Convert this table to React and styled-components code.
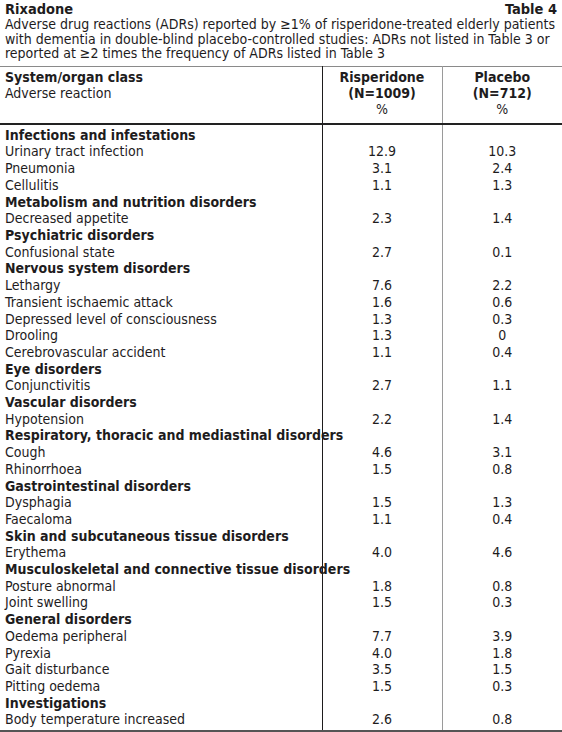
import React from 'react';
import styled, { createGlobalStyle } from 'styled-components';

const GlobalStyle = createGlobalStyle`
  body {
    margin: 0;
    background: #ffffff;
    color: #1e1c1d;
    font-family: "DejaVu Sans Condensed", "Liberation Sans Narrow", "Arial Narrow", sans-serif;
  }
`;

const rows = [
  { group: 'Infections and infestations' },
  { name: 'Urinary tract infection', ris: '12.9', pla: '10.3' },
  { name: 'Pneumonia', ris: '3.1', pla: '2.4' },
  { name: 'Cellulitis', ris: '1.1', pla: '1.3' },
  { group: 'Metabolism and nutrition disorders' },
  { name: 'Decreased appetite', ris: '2.3', pla: '1.4' },
  { group: 'Psychiatric disorders' },
  { name: 'Confusional state', ris: '2.7', pla: '0.1' },
  { group: 'Nervous system disorders' },
  { name: 'Lethargy', ris: '7.6', pla: '2.2' },
  { name: 'Transient ischaemic attack', ris: '1.6', pla: '0.6' },
  { name: 'Depressed level of consciousness', ris: '1.3', pla: '0.3' },
  { name: 'Drooling', ris: '1.3', pla: '0' },
  { name: 'Cerebrovascular accident', ris: '1.1', pla: '0.4' },
  { group: 'Eye disorders' },
  { name: 'Conjunctivitis', ris: '2.7', pla: '1.1' },
  { group: 'Vascular disorders' },
  { name: 'Hypotension', ris: '2.2', pla: '1.4' },
  { group: 'Respiratory, thoracic and mediastinal disorders' },
  { name: 'Cough', ris: '4.6', pla: '3.1' },
  { name: 'Rhinorrhoea', ris: '1.5', pla: '0.8' },
  { group: 'Gastrointestinal disorders' },
  { name: 'Dysphagia', ris: '1.5', pla: '1.3' },
  { name: 'Faecaloma', ris: '1.1', pla: '0.4' },
  { group: 'Skin and subcutaneous tissue disorders' },
  { name: 'Erythema', ris: '4.0', pla: '4.6' },
  { group: 'Musculoskeletal and connective tissue disorders' },
  { name: 'Posture abnormal', ris: '1.8', pla: '0.8' },
  { name: 'Joint swelling', ris: '1.5', pla: '0.3' },
  { group: 'General disorders' },
  { name: 'Oedema peripheral', ris: '7.7', pla: '3.9' },
  { name: 'Pyrexia', ris: '4.0', pla: '1.8' },
  { name: 'Gait disturbance', ris: '3.5', pla: '1.5' },
  { name: 'Pitting oedema', ris: '1.5', pla: '0.3' },
  { group: 'Investigations' },
  { name: 'Body temperature increased', ris: '2.6', pla: '0.8' },
];

const App = () => {
  return (
    <>
      <GlobalStyle />
      <Page>
        <TitleBar>
          <span>Rixadone</span>
          <span>Table 4</span>
        </TitleBar>
        <Caption>
          Adverse drug reactions (ADRs) reported by ≥1% of risperidone-treated elderly patients
          <br />
          with dementia in double-blind placebo-controlled studies: ADRs not listed in Table 3 or
          <br />
          reported at ≥2 times the frequency of ADRs listed in Table 3
        </Caption>
        <Table>
          <colgroup>
            <col style={{ width: 322 }} />
            <col style={{ width: 120 }} />
            <col style={{ width: 120 }} />
          </colgroup>
          <thead>
            <tr>
              <HeadLabel>
                <strong>System/organ class</strong>
                <br />
                Adverse reaction
              </HeadLabel>
              <HeadValue $divider="dark">
                <strong>Risperidone</strong>
                <br />
                <strong>(N=1009)</strong>
                <br />
                %
              </HeadValue>
              <HeadValue $divider="light">
                <strong>Placebo</strong>
                <br />
                <strong>(N=712)</strong>
                <br />
                %
              </HeadValue>
            </tr>
          </thead>
          <tbody>
            {rows.map((row, i) => {
              const first = i === 0;
              const last = i === rows.length - 1;
              return row.group ? (
                <tr key={i}>
                  <GroupCell $first={first}>{row.group}</GroupCell>
                  <ValueCell $divider="dark" $first={first} />
                  <ValueCell $divider="light" $first={first} />
                </tr>
              ) : (
                <tr key={i}>
                  <LabelCell $last={last}>{row.name}</LabelCell>
                  <ValueCell $divider="dark" $last={last}>{row.ris}</ValueCell>
                  <ValueCell $divider="light" $last={last}>{row.pla}</ValueCell>
                </tr>
              );
            })}
          </tbody>
        </Table>
      </Page>
    </>
  );
};

export default App;

const Page = styled.main`
  width: 562px;
  font-size: 14px;
`;

const TitleBar = styled.div`
  display: flex;
  justify-content: space-between;
  padding: 1px 5px 0 5px;
  font-size: 14.5px;
  font-weight: bold;
  line-height: 16px;
`;

const Caption = styled.p`
  margin: 0;
  padding: 0 5px 5px 5px;
  line-height: 14.6px;
  white-space: nowrap;
`;

const Table = styled.table`
  width: 562px;
  border-collapse: collapse;
  table-layout: fixed;
  border-top: 1px solid #8a8a8a;
  border-bottom: 2px solid #555555;

  strong {
    font-weight: bold;
  }
`;

const HeadLabel = styled.th`
  text-align: left;
  vertical-align: top;
  font-weight: normal;
  line-height: 16px;
  padding: 2px 5px 6px 5px;
  border-bottom: 2px solid #222222;
`;

const HeadValue = styled.th`
  text-align: center;
  vertical-align: top;
  font-weight: normal;
  line-height: 16px;
  padding: 2px 0 6px 0;
  border-bottom: 2px solid #222222;
  border-left: 1px solid ${(props) => (props.$divider === 'dark' ? '#1e1c1d' : '#9a9a9a')};
`;

const LabelCell = styled.td`
  padding: 0 5px;
  height: 16.7px;
  line-height: 16.7px;
  padding-bottom: ${(props) => (props.$last ? '2px' : '0')};
  white-space: nowrap;
`;

const GroupCell = styled(LabelCell)`
  font-weight: bold;
  padding-top: ${(props) => (props.$first ? '2px' : '0')};
`;

const ValueCell = styled.td`
  text-align: center;
  height: 16.7px;
  line-height: 16.7px;
  padding: 0;
  padding-top: ${(props) => (props.$first ? '2px' : '0')};
  padding-bottom: ${(props) => (props.$last ? '2px' : '0')};
  border-left: 1px solid ${(props) => (props.$divider === 'dark' ? '#1e1c1d' : '#9a9a9a')};
`;
